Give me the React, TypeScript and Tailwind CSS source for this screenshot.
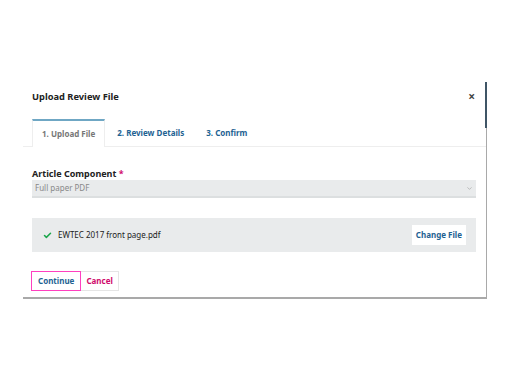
import { Check, ChevronDown } from "lucide-react";

export default function App() {
  return (
    <div className="min-h-[382px] w-[510px] bg-white pt-[82px] pl-[23px] font-['Noto_Sans',sans-serif]">
      <div className="relative w-[464px] h-[217px] border-r border-b-2 border-[#a9a9a9] bg-white">
        <div className="absolute right-[-1px] top-0 h-[46px] w-[2px] bg-[#3f5566]" />

        <div className="flex items-center justify-between pl-[9px] pr-[11px] h-[30px]">
          <h2 className="text-[9.3px] font-bold text-[#222]">Upload Review File</h2>
          <span className="text-[12px] font-bold leading-none text-[#444]">×</span>
        </div>

        <div className="mt-[7px] flex items-end border-b border-[#eeeeee] pl-[9px] h-[28px]">
          <div className="h-[28px] -mb-px flex items-center border-t-2 border-x border-t-[#6fa7c4] border-x-[#eeeeee] bg-white px-[9px] text-[8px] font-bold text-[#777]">
            1. Upload File
          </div>
          <div className="h-[27px] flex items-center px-[12px] text-[8px] font-bold text-[#1e6292]">
            2. Review Details
          </div>
          <div className="h-[27px] flex items-center px-[10px] text-[8px] font-bold text-[#1e6292]">
            3. Confirm
          </div>
        </div>

        <div className="px-[9px] pr-[10px]">
          <div className="mt-[21px] text-[9px] font-bold leading-[12px] text-[#222]">
            Article Component <span className="text-[#d00a6c]">*</span>
          </div>
          <div className="flex h-[18px] items-center justify-between bg-[#e9ebec] border-b-2 border-[#dcdfe0] px-[3px] text-[8px] text-[#888]">
            <span>Full paper PDF</span>
            <ChevronDown size={7} className="text-[#999]" strokeWidth={2} />
          </div>

          <div className="mt-[20px] flex h-[34px] items-center justify-between bg-[#e9ebec] pl-[11px] pr-[10px]">
            <div className="flex items-center gap-[6px] text-[8px] text-[#222]">
              <Check size={9} strokeWidth={4} className="text-[#1aa64b]" />
              <span>EWTEC 2017 front page.pdf</span>
            </div>
            <button className="h-[20px] bg-white px-[4px] text-[8px] font-bold text-[#1e6292]">
              Change File
            </button>
          </div>

          <div className="mt-[19px] -ml-px flex items-center">
            <button className="h-[20px] border border-[#ff40bf] bg-white px-[6px] text-[8px] font-bold text-[#1e6292]">
              Continue
            </button>
            <button className="h-[20px] border border-l-0 border-[#e5e5e5] bg-white px-[5px] text-[8px] font-bold text-[#d00a6c]">
              Cancel
            </button>
          </div>
        </div>
      </div>
    </div>
  );
}
